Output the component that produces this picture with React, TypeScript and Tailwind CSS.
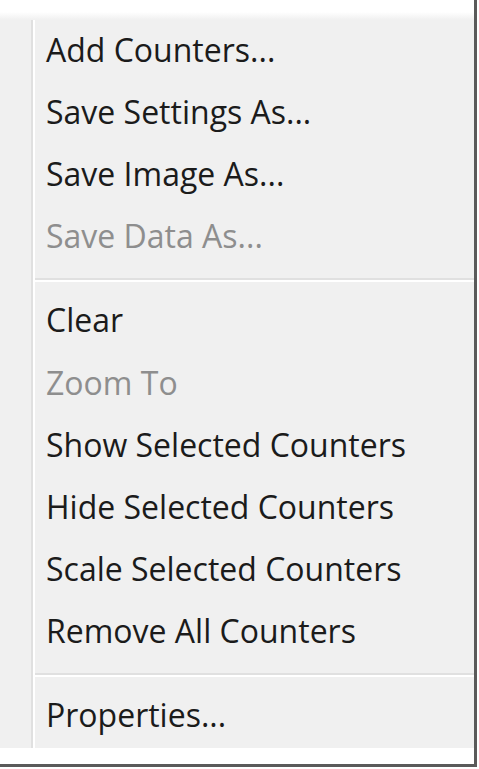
import React from "react";

type Item = { label: string; disabled?: boolean } | { sep: true };

const items: Item[] = [
  { label: "Add Counters..." },
  { label: "Save Settings As..." },
  { label: "Save Image As..." },
  { label: "Save Data As...", disabled: true },
  { sep: true },
  { label: "Clear" },
  { label: "Zoom To", disabled: true },
  { label: "Show Selected Counters" },
  { label: "Hide Selected Counters" },
  { label: "Scale Selected Counters" },
  { label: "Remove All Counters" },
  { sep: true },
  { label: "Properties..." },
];

export default function App() {
  return (
    <div
      className="w-[479px] h-[769px] bg-white overflow-hidden"
      style={{ fontFamily: '"Open Sans", "Noto Sans", sans-serif' }}
    >
      <div className="w-[477px] h-[767px] flex flex-col border-r-[3px] border-b-[3px] border-[#5a5a5a]">
        <div className="h-[12px] bg-white" />
        <div className="h-[8px] bg-gradient-to-b from-white to-[#f0f0f0]" />
        <div className="flex-1 flex bg-[#f0f0f0] min-h-0">
          <div className="w-[31px]" />
          <div className="w-[2px] bg-[#e0e0e0]" />
          <div className="w-[2px] bg-white" />
          <div className="flex-1 flex flex-col">
            {items.map((it, i) =>
              "sep" in it ? (
                <div key={i} className="h-[22px] flex flex-col justify-center">
                  <div className="h-[2px] bg-[#e0e0e0]" />
                  <div className="h-[2px] bg-white" />
                </div>
              ) : (
                <div
                  key={i}
                  className={
                    "h-[62.5px] flex items-center pl-[11px] pb-[3px] text-[32px] " +
                    (it.disabled ? "text-[#8e8e8e]" : "text-[#1b1b1b]")
                  }
                >
                  {it.label}
                </div>
              )
            )}
          </div>
        </div>
        <div className="h-[16px] bg-white" />
      </div>
    </div>
  );
}
